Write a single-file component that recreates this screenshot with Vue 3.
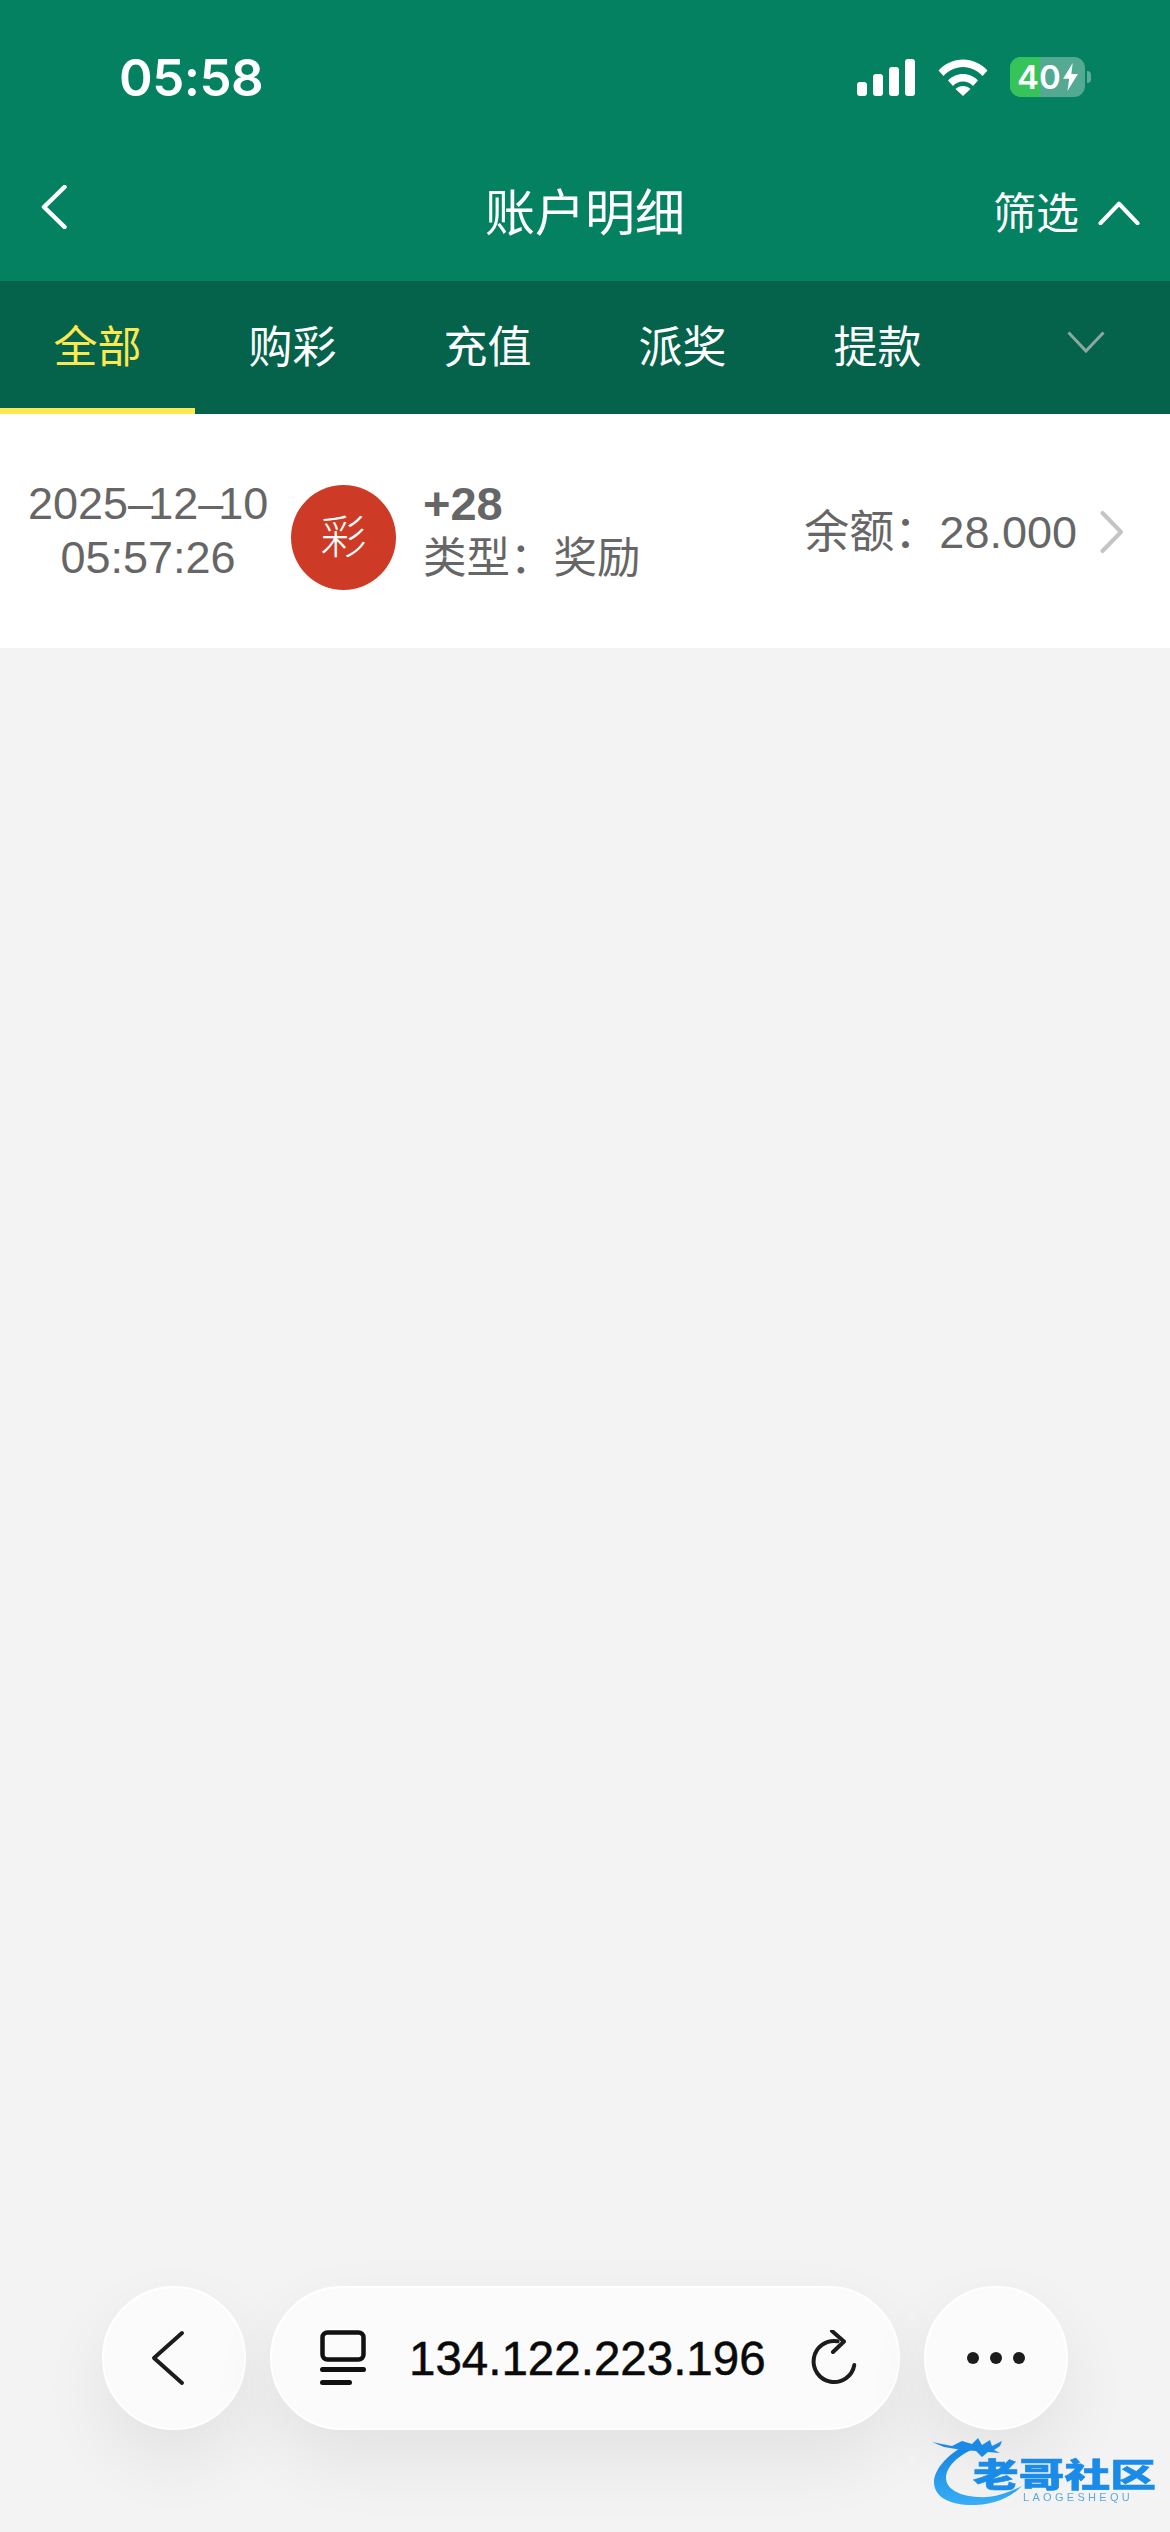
<script setup>
const tabs = ['全部', '购彩', '充值', '派奖', '提款']
const signalBars = [14, 22, 29, 37]
</script>

<template>
  <div class="page">
    <header class="top">
      <div class="status">
        <span class="time">05:58</span>
        <div class="status-icons">
          <div class="signal">
            <i v-for="h in signalBars" :key="h" :style="{ height: h + 'px' }"></i>
          </div>
          <svg class="wifi" width="50" height="37" viewBox="0 0 50 37">
            <path d="M0.5 11.5C7 4.5 15.5 0.5 25 0.5S43 4.500 49.500 11.500L44.500 17C39.500 11.500 32.500 8 25 8S10.500 11.500 5.500 17Z" fill="#fff" />
            <path d="M10 21.500C13.800 17.400 19.200 15 25 15S36.200 17.400 40 21.500L35 27C32.500 24.200 29 22.500 25 22.500S17.500 24.200 15 27Z" fill="#fff" />
            <path d="M17.500 30C19.500 28 22 27 25 27S30.500 28 32.500 30L25 37Z" fill="#fff" />
          </svg>
          <div class="battery">
            <div class="battery-body">
              <div class="battery-fill"></div>
              <span class="battery-num">40</span>
              <svg class="bolt" width="17" height="28" viewBox="0 0 18 32">
                <path d="M11.500 0L0.500 18H7.500L5.500 32L17.500 12.500H10Z" fill="#fff" />
              </svg>
            </div>
            <div class="battery-nub"></div>
          </div>
        </div>
      </div>
      <div class="nav">
        <div class="nav-left">
          <svg width="26" height="44" viewBox="0 0 26 44">
            <path d="M23.500 2L3 22L23.500 42" fill="none" stroke="#fff" stroke-width="4.500" stroke-linecap="round" stroke-linejoin="round" />
          </svg>
        </div>
        <div class="nav-title">账户明细</div>
        <div class="nav-right">
          <span>筛选</span>
          <svg width="42" height="24" viewBox="0 0 44 26">
            <path d="M2 24L22 3L42 24" fill="none" stroke="#fff" stroke-width="4.500" stroke-linecap="round" stroke-linejoin="round" />
          </svg>
        </div>
      </div>
    </header>

    <nav class="tabs">
      <div v-for="(t, i) in tabs" :key="t" class="tab" :class="{ active: i === 0 }">{{ t }}</div>
      <div class="tab-more">
        <svg width="38" height="22" viewBox="0 0 38 22">
          <path d="M1.500 1.500L19 20L36.500 1.500" fill="none" stroke="#8fa89f" stroke-width="3" />
        </svg>
      </div>
    </nav>

    <section class="record">
      <div class="record-date">
        <div>2025<span class="dash">–</span>12<span class="dash">–</span>10</div>
        <div>05:57:26</div>
      </div>
      <div class="avatar">彩</div>
      <div class="record-info">
        <div class="amount">+28</div>
        <div>类型：奖励</div>
      </div>
      <div class="balance">余额：28.000</div>
      <svg class="arrow" width="24" height="42" viewBox="0 0 24 42">
        <path d="M2.500 2L21 21L2.500 40" fill="none" stroke="#c4c4c4" stroke-width="4" stroke-linecap="round" stroke-linejoin="round" />
      </svg>
    </section>

    <div class="browser-bar">
      <div class="round-btn back">
        <svg width="34" height="56" viewBox="0 0 34 56">
          <path d="M31 3L3 28L31 53" fill="none" stroke="#1c1c1c" stroke-width="4" stroke-linecap="round" stroke-linejoin="round" />
        </svg>
      </div>
      <div class="url-pill">
        <svg width="46" height="56" viewBox="0 0 46 56">
          <rect x="2.500" y="2.500" width="41" height="27" rx="5" fill="none" stroke="#111" stroke-width="4.500" />
          <rect x="0" y="37" width="46" height="5" rx="2.500" fill="#111" />
          <rect x="0" y="50" width="32" height="5" rx="2.500" fill="#111" />
        </svg>
        <span class="url">134.122.223.196</span>
        <svg width="48" height="56" viewBox="0 0 48 56">
          <path d="M24 11A20.500 20.500 0 1 0 44.500 31.500" fill="none" stroke="#1c1c1c" stroke-width="4" stroke-linecap="round" transform="rotate(10 24 32)" />
          <path d="M22 1L34 11.500L23 22" fill="none" stroke="#1c1c1c" stroke-width="4" stroke-linecap="round" stroke-linejoin="round" />
        </svg>
      </div>
      <div class="round-btn dots">
        <i></i><i></i><i></i>
      </div>
    </div>

    <div class="watermark">
      <svg class="dragon" width="114" height="72" viewBox="0 0 114 72">
        <defs>
          <linearGradient id="dragonGrad" x1="0" y1="0" x2="0" y2="1">
            <stop offset="0" stop-color="#1582e0" />
            <stop offset="1" stop-color="#38aef5" />
          </linearGradient>
        </defs>
        <path d="M34 9C12 20 2 36 2 46C2 62 20 70 44 69C62 68 78 62 90 50C74 58 60 62 46 61C26 60 14 52 14 42C14 30 28 18 44 12Z" fill="url(#dragonGrad)" />
        <path d="M0 6L20 10L30 5L40 8L46 2L50 9L58 4L60 10L70 5L68 10L62 14L68 17L56 16L50 21L44 15L32 14L24 13L12 11Z" fill="#1a8ae6" />
      </svg>
      <div class="wm-title">老哥社区</div>
      <div class="wm-sub">LAOGESHEQU</div>
    </div>
  </div>
</template>

<style>
html, body {
  margin: 0;
  padding: 0;
  background: #f3f3f3;
}
</style>

<style scoped>
.page {
  position: relative;
  width: 1170px;
  height: 2532px;
  overflow: hidden;
  background: #f3f3f3;
  font-family: "Liberation Sans", "Noto Sans CJK SC", sans-serif;
}

.top {
  height: 281px;
  background: #038160;
  color: #fff;
  box-sizing: border-box;
  padding-top: 57px;
}

.status {
  display: flex;
  justify-content: space-between;
  align-items: flex-start;
  padding: 0 79px 0 119px;
  height: 40px;
}

.time {
  font-family: Inter, "Liberation Sans", sans-serif;
  font-size: 51px;
  font-weight: 600;
  line-height: 42px;
  letter-spacing: -0.5px;
}

.status-icons {
  display: flex;
  align-items: flex-start;
}

.signal {
  display: flex;
  align-items: flex-end;
  gap: 6px;
  height: 37px;
  margin-top: 2px;
}

.signal i {
  display: block;
  width: 10px;
  border-radius: 3px;
  background: #fff;
}

.wifi {
  margin: 2px 22px 0 23px;
}

.battery {
  display: flex;
  align-items: center;
}

.battery-body {
  position: relative;
  width: 75px;
  height: 40px;
  border-radius: 11px;
  overflow: hidden;
  background: rgba(255, 255, 255, 0.32);
  display: flex;
  align-items: center;
  padding-left: 7px;
  box-sizing: border-box;
}

.battery-fill {
  position: absolute;
  left: 0;
  top: 0;
  bottom: 0;
  width: 30px;
  background: #36c45a;
}

.battery-num {
  position: relative;
  font-family: Inter, "Liberation Sans", sans-serif;
  font-size: 33px;
  font-weight: 600;
  line-height: 40px;
}

.bolt {
  flex: none;
  position: relative;
  margin-left: 1px;
}

.battery-nub {
  width: 4px;
  height: 12px;
  margin-left: 2px;
  border-radius: 0 4px 4px 0;
  background: rgba(255, 255, 255, 0.35);
}

.nav {
  display: grid;
  grid-template-columns: 1fr auto 1fr;
  align-items: center;
  height: 64px;
  margin-top: 85px;
  padding: 0 30px;
}

.nav-left {
  display: flex;
  margin: -15px 0 0 11px;
}

.nav-title {
  font-size: 50px;
  line-height: 64px;
}

.nav-right {
  display: flex;
  justify-content: flex-end;
  align-items: center;
  gap: 19px;
  font-size: 43px;
  line-height: 64px;
}

.nav-right svg {
  margin-top: -3px;
}

.tabs {
  display: flex;
  height: 133px;
  background: #04634a;
}

.tab {
  box-sizing: border-box;
  width: 195px;
  text-align: center;
  font-size: 44px;
  line-height: 133px;
  color: #fff;
  border-bottom: 6px solid transparent;
}

.tab.active {
  color: #fde84f;
  border-bottom-color: #fde84f;
}

.tab-more {
  flex: 1;
  display: flex;
  align-items: center;
  justify-content: center;
  padding: 0 0 12px 27px;
}

.record {
  display: flex;
  align-items: center;
  height: 234px;
  padding: 0 46px 0 28px;
  background: #fff;
  color: #666;
  font-size: 43.500px;
}

.record-date {
  width: 240px;
  text-align: center;
  font-size: 45px;
  line-height: 54px;
  white-space: nowrap;
}

.dash {
  letter-spacing: -5px;
}

.avatar {
  flex: none;
  width: 105px;
  height: 105px;
  margin: 12px 27px 0 23px;
  border-radius: 50%;
  background: #cd3b26;
  color: #fff;
  font-size: 46px;
  font-weight: 300;
  line-height: 105px;
  text-align: center;
}

.record-info {
  line-height: 54px;
}

.amount {
  font-size: 47px;
  font-weight: 700;
}

.balance {
  margin-left: auto;
  margin-top: -6px;
  font-size: 45px;
}

.arrow {
  margin: 2px 0 0 23px;
}

.browser-bar {
  position: absolute;
  left: 102px;
  top: 2286px;
  display: flex;
  gap: 24px;
}

.round-btn,
.url-pill {
  box-sizing: border-box;
  height: 144px;
  background: #fbfbfb;
  border: 2px solid #fff;
  box-shadow: 0 30px 70px rgba(0, 0, 0, 0.07);
}

.round-btn {
  width: 144px;
  border-radius: 50%;
  display: flex;
  align-items: center;
  justify-content: center;
}

.round-btn.back svg {
  margin-right: 12px;
}

.url-pill {
  width: 630px;
  border-radius: 72px;
  display: flex;
  align-items: center;
  padding: 0 40px 0 48px;
}

.url {
  margin: 0 auto 0 43px;
  font-size: 47.500px;
  font-weight: 400;
  color: #0a0a0a;
  -webkit-text-stroke: 0.5px #0a0a0a;
}

.dots {
  gap: 11px;
}

.dots i {
  display: block;
  width: 12px;
  height: 12px;
  border-radius: 50%;
  background: #1c1c1c;
}

.watermark {
  position: absolute;
  left: 932px;
  top: 2436px;
  width: 230px;
  height: 90px;
  filter: blur(0.5px);
}

.dragon {
  position: absolute;
  left: 0;
  top: 0;
}

.wm-title {
  position: absolute;
  left: 41px;
  top: 20px;
  width: 146px;
  font-size: 36px;
  line-height: 40px;
  font-weight: 900;
  white-space: nowrap;
  transform: scaleX(1.27) scaleY(0.9);
  transform-origin: left center;
  color: #1a8ce8;
  -webkit-text-stroke: 0.6px #1a8ce8;
}

.wm-sub {
  position: absolute;
  left: 91px;
  top: 55px;
  font-size: 11px;
  line-height: 13px;
  letter-spacing: 3.300px;
  color: #5fa9e0;
}
</style>
